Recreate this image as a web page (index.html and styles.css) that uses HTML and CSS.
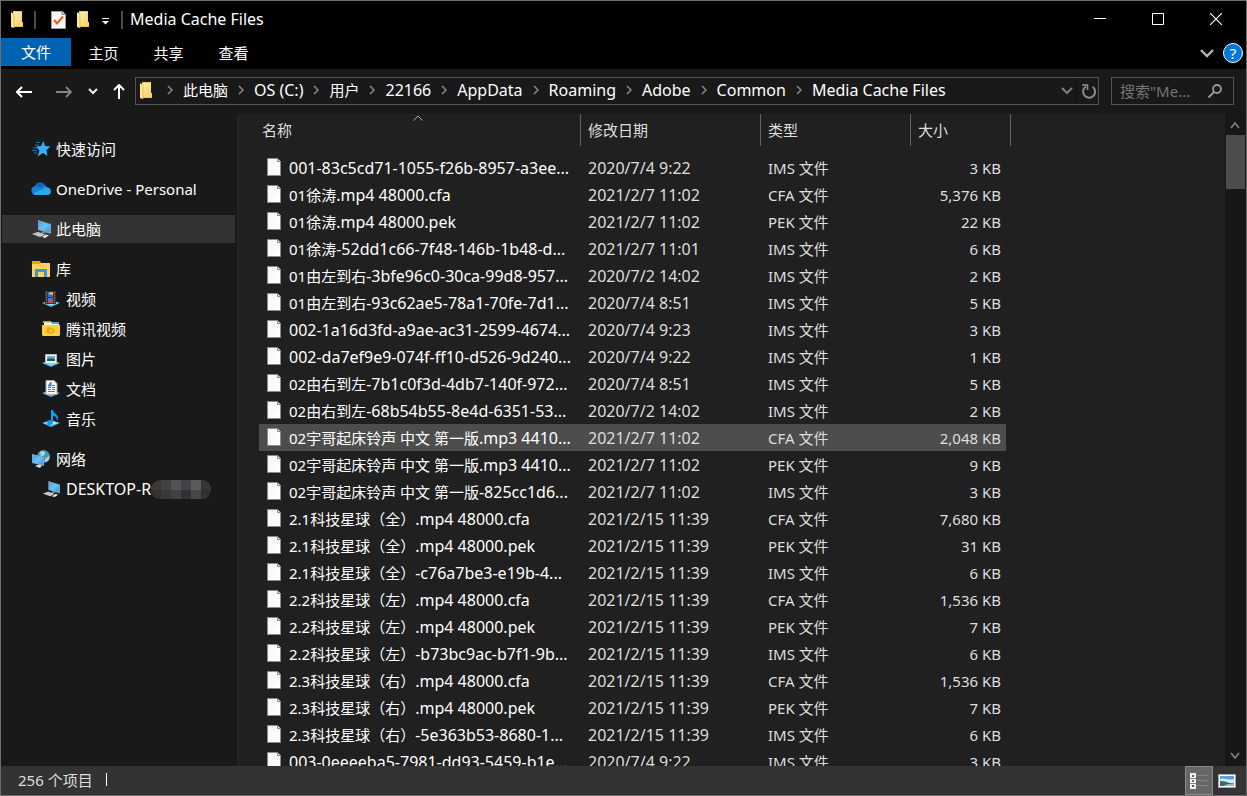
FILE: index.html
```html
<!DOCTYPE html>
<html lang="zh-CN">
<head>
<meta charset="utf-8">
<title>Media Cache Files</title>
<link rel="stylesheet" href="styles.css">
</head>
<body>
<svg class="defs" aria-hidden="true">
  <defs>
    <linearGradient id="paper" x1="0" y1="0" x2="1" y2="1"><stop offset="0" stop-color="#f4f6f8"/><stop offset="1" stop-color="#fff"/></linearGradient>
    <linearGradient id="gold" x1="0" y1="0" x2="1" y2="1"><stop offset="0" stop-color="#fff0a8"/><stop offset="1" stop-color="#f5cd62"/></linearGradient>
    <linearGradient id="screen" x1="0" y1="0" x2="1" y2="1"><stop offset="0" stop-color="#3da3f2"/><stop offset=".5" stop-color="#68c4ff"/><stop offset="1" stop-color="#2c9cf2"/></linearGradient>
    <symbol id="file" viewBox="0 0 14 18"><path d="M.5.5h10l3 3v14H.5z" fill="url(#paper)" stroke="#8b8b8b"/><path d="M10.500.5v3h3" fill="#ddd" stroke="#8b8b8b"/></symbol>
    <symbol id="folder" viewBox="0 0 13 18"><path d="M2 0h9v11h1v5H2z" fill="#eec35d"/><path d="M3 1h8v10h1v4H3z" fill="url(#gold)"/><path d="M0 1l3 2v14l-3-1z" fill="#ffe69a"/><path d="M3 3v14" stroke="#d9a640" stroke-width=".6"/></symbol>
    <symbol id="next" viewBox="0 0 6 10"><path d="M1 1l4 4-4 4" fill="none" stroke="#8a8a8a" stroke-width="1.500"/></symbol>
    <symbol id="pc" viewBox="0 0 20 18"><path d="M7 0l13 4v10L7 10z" fill="#8d9ba5"/><path d="M8 1l11 4v7.500L8 9z" fill="url(#screen)"/><path d="M12 11l4 1.500-4 1-2-1z" fill="#7c868e"/><path d="M1 14l6-2 7 2.500-5 2.500z" fill="#d9dde2"/><path d="M11 17l4-2.500 3 .8-4 2.700z" fill="#e6e9ed"/><path d="M3 14l7 2M5 13.200l7 2" stroke="#9aa1a8" stroke-width=".6"/></symbol>
    <symbol id="stand" viewBox="0 0 18 7"><path d="M0 3l9-3 9 3-9 4z" fill="#4eb8f0"/><path d="M2 3l7-2 7 2-7 2z" fill="#bfeaff"/></symbol>
  </defs>
</svg>

<div class="window">
  <header class="titlebar">
    <div class="quick">
      <svg class="ic-folder" aria-hidden="true"><use href="#folder"/></svg>
      <span class="sep sep-first"></span>
      <button class="plain q-check" aria-label="属性"><svg width="15" height="18" viewBox="0 0 15 18"><path d="M.5.5h11l3 3v14H.5z" fill="#f7f7f7" stroke="#9b9b9b"/><path d="M11 .5v3h3.500" fill="#ccc" stroke="#8a8a8a"/><path d="M3 9l3 3.500 6-7" fill="none" stroke="#ee5a1c" stroke-width="2"/></svg></button>
      <button class="plain q-folder" aria-label="新建文件夹"><svg class="ic-folder"><use href="#folder"/></svg></button>
      <button class="plain q-more" aria-label="自定义快速访问工具栏"><svg width="7" height="7" viewBox="0 0 7 7"><path d="M0 .5h7" stroke="#fff"/><path d="M0 3h7L3.500 6.500z" fill="#fff"/></svg></button>
      <span class="sep"></span>
    </div>
    <h1>Media Cache Files</h1>
    <div class="caption">
      <button aria-label="最小化"><svg width="12" height="12"><path d="M0 5.500h12" stroke="#fff"/></svg></button>
      <button aria-label="最大化"><svg width="12" height="12"><path d="M.5.5h11v11H.5z" fill="none" stroke="#fff"/></svg></button>
      <button aria-label="关闭"><svg width="12" height="12"><path d="M0 0l12 12M12 0L0 12" stroke="#fff" stroke-width="1.200"/></svg></button>
    </div>
  </header>

  <div class="ribbon">
    <button class="tab active">文件</button>
    <button class="tab">主页</button>
    <button class="tab">共享</button>
    <button class="tab">查看</button>
    <div class="ribbon-tools">
      <button class="plain" aria-label="展开功能区"><svg width="14" height="9" viewBox="0 0 14 9"><path d="M1 1l6 6 6-6" fill="none" stroke="#b5b5b5" stroke-width="2.400"/></svg></button>
      <button class="help" aria-label="帮助">?</button>
    </div>
  </div>

  <div class="navbar">
    <div class="history">
      <button class="plain" aria-label="后退"><svg width="16" height="12" viewBox="0 0 16 12"><path d="M6 1L1 6l5 5M1 6h15" fill="none" stroke="#fff" stroke-width="2"/></svg></button>
      <button class="plain h-fwd" aria-label="前进"><svg width="16" height="12" viewBox="0 0 16 12"><path d="M10 1l5 5-5 5M15 6H0" fill="none" stroke="#858585" stroke-width="1.800"/></svg></button>
      <button class="plain h-recent" aria-label="最近浏览的位置"><svg width="10" height="7" viewBox="0 0 10 7"><path d="M1 1l4 4 4-4" fill="none" stroke="#eee" stroke-width="2"/></svg></button>
      <button class="plain h-up" aria-label="上移"><svg width="12" height="15" viewBox="0 0 12 15"><path d="M1 6l5-5 5 5M6 1v14" fill="none" stroke="#fff" stroke-width="2"/></svg></button>
    </div>
    <nav class="address" aria-label="路径">
      <svg class="ic-folder" aria-hidden="true"><use href="#folder"/></svg>
      <ol class="crumbs">
        <li><svg class="next"><use href="#next"/></svg><a href="#pc">此电脑</a></li>
        <li><svg class="next"><use href="#next"/></svg><a href="#c" class="lat">OS (C:)</a></li>
        <li><svg class="next"><use href="#next"/></svg><a href="#users">用户</a></li>
        <li><svg class="next"><use href="#next"/></svg><a href="#22166" class="lat">22166</a></li>
        <li><svg class="next"><use href="#next"/></svg><a href="#appdata" class="lat">AppData</a></li>
        <li><svg class="next"><use href="#next"/></svg><a href="#roaming" class="lat">Roaming</a></li>
        <li><svg class="next"><use href="#next"/></svg><a href="#adobe" class="lat">Adobe</a></li>
        <li><svg class="next"><use href="#next"/></svg><a href="#common" class="lat">Common</a></li>
        <li><svg class="next"><use href="#next"/></svg><a href="#cache" class="lat">Media Cache Files</a></li>
      </ol>
      <button class="plain" aria-label="上一个位置"><svg width="12" height="8" viewBox="0 0 12 8"><path d="M1 1l5 5 5-5" fill="none" stroke="#808080" stroke-width="2"/></svg></button>
      <button class="plain refresh" aria-label="刷新"><svg width="14" height="15" viewBox="0 0 14 15"><path d="M10.500 2.700A6 6 0 1 1 4 2.500" fill="none" stroke="#8a8a8a" stroke-width="2"/><path d="M0 1h5.500v5" fill="none" stroke="#8a8a8a" stroke-width="1.600"/></svg></button>
    </nav>
    <form class="search">
      <input type="text" placeholder='搜索"Me...' aria-label="搜索">
      <button type="button" class="plain" aria-label="开始搜索"><svg width="14" height="14" viewBox="0 0 14 14"><circle cx="9" cy="5" r="4" fill="none" stroke="#999" stroke-width="1.800"/><path d="M6 8l-5.500 5.500" stroke="#999" stroke-width="2"/></svg></button>
    </form>
  </div>

  <div class="body">
    <nav class="sidebar" aria-label="导航窗格">
      <ul>
        <li class="top"><a href="#quick"><svg width="20" height="18" viewBox="0 0 20 18"><path d="M12.500 1l1.500 5 5.500.5-4 3.500 1 6-4.500-3-5.500 3.500 2-6L5 6.500l5-.5z" fill="#34b0f7"/><path d="M5 2.500h4M4 5h4M2 8h4M1 10.500h5M3 13h3" stroke="#1d6fa6" stroke-width="1"/></svg>快速访问</a></li>
        <li class="top"><a href="#onedrive"><svg width="20" height="18" viewBox="0 0 20 18"><path d="M4 6.500C5 1 13 1 14.500 6l-8 4z" fill="#0f63b5"/><path d="M5 15a4.500 4.500 0 0 1-1-8.900c3-.6 5 .9 8 2.900l-5 6z" fill="#1582d8"/><path d="M10 8c1-2 4-3 6-1.500l-3 3z" fill="#1582d8"/><path d="M2 13.500L12 9c2-3 8-2 8 2.500 0 2-1.500 3.500-3.500 3.500H5c-1.500 0-2.500-.6-3-1.500z" fill="#2ba7ee"/></svg>OneDrive - Personal</a></li>
        <li class="top"><a href="#pc" class="current"><svg width="20" height="18"><use href="#pc"/></svg>此电脑</a></li>
        <li class="top"><a href="#lib"><svg width="20" height="18" viewBox="0 0 20 18"><path d="M1 1h8l1 2h9v13H1z" fill="#e6a50b"/><path d="M1 4h8l1-1h9v14H1z" fill="#ffd45e"/><path d="M4 17V9h12v8h-3v-5H7v5z" fill="#3d96dc"/></svg>库</a></li>
        <li class="sub"><a href="#video"><svg width="18" height="18" viewBox="0 0 18 18"><svg y="10" width="18" height="7"><use href="#stand"/></svg><path d="M3 1h11v13H3z" fill="#37322f"/><path d="M6 2h5v5H6z" fill="#3268d8"/><path d="M6 4l3-2h2v3z" fill="#e9bd36"/><path d="M6 8h5v5H6z" fill="#4d70e8"/><path d="M6 12l5-2v3H6z" fill="#d94930"/><path d="M4.500 2v11M12.500 2v11" stroke="#999" stroke-dasharray="1 1.500"/></svg>视频</a></li>
        <li class="sub"><a href="#tencent"><svg width="18" height="18" viewBox="0 0 18 18"><path d="M1 1h8l1 2H1z" fill="#d89d18"/><path d="M2 2.500h15v4H2z" fill="#f3f3ea"/><path d="M10 2h7v2h-7z" fill="#4baab1"/><path d="M0 5h18v10l-1 1H1l-1-1z" fill="#ffcf42"/><path d="M5 7.500c3-1 8 .5 8 3.200s-5 4-8 2.300c-1-1-1-4.500 0-5.500z" fill="#e9aa18"/><path d="M8 9v3.500l3-1.700z" fill="#ffcf42"/></svg>腾讯视频</a></li>
        <li class="sub"><a href="#pics"><svg width="18" height="18" viewBox="0 0 18 18"><svg y="10" width="18" height="7"><use href="#stand"/></svg><path d="M3.500 4.500h11v9h-11z" fill="#f5f5f5" stroke="#b9b9b9"/><path d="M5 6h8v5H5z" fill="#76a9dc"/><path d="M5 9l3-1 5 1v2H5z" fill="#21634b"/></svg>图片</a></li>
        <li class="sub"><a href="#docs"><svg width="18" height="18" viewBox="0 0 18 18"><svg y="10" width="18" height="7"><use href="#stand"/></svg><path d="M4 .5h8l3 3v11H4z" fill="#f6f6f6" stroke="#aaa"/><path d="M9 2L6 6h3zM6 7.500h3M6 9.500h3M6 11.500h7" fill="#248bd2" stroke="#248bd2"/><path d="M10 5.500h3M10 7.500h3M10 9.500h3" stroke="#667784"/></svg>文档</a></li>
        <li class="sub"><a href="#music"><svg width="18" height="18" viewBox="0 0 18 18"><svg y="10" width="18" height="7"><use href="#stand"/></svg><path d="M9 0h2c1 4 5 4 5 8 0 2-1 3-1 3 0-4-2-5-4-5v6c0 4-6 4-6 1 0-2 2-3 4-3z" fill="#0b9cf5"/></svg>音乐</a></li>
        <li class="top"><a href="#net"><svg width="20" height="18" viewBox="0 0 20 18"><circle cx="12.500" cy="6.500" r="6.500" fill="#4b94b6"/><path d="M9 2c3-2 6 0 5 2s-4 2-4 4M14 9l4-3c1 3-1 6-4 6z" fill="#a9d8e4"/><path d="M1 4l12 3v9L1 13z" fill="#7fa9c4"/><path d="M2 5.500l10 2.500v6.500L2 12z" fill="url(#screen)"/><path d="M4 16l4-1.500 3 1-2 2.500z" fill="#d8dde1"/></svg>网络</a></li>
        <li class="sub"><a href="#desktop"><svg width="18" height="18"><use href="#pc"/></svg><span class="lat">DESKTOP-R</span><svg class="mosaic" width="60" height="19" viewBox="0 0 60 19" aria-hidden="true"><path d="M0 0h60v19H0z" fill="#393939"/><path d="M10 0h10v10H10z" fill="#424143"/><path d="M20 0h10v10H20z" fill="#535353"/><path d="M30 0h10v10H30z" fill="#434249"/><path d="M40 0h10v10H40z" fill="#595c5b"/><path d="M50 0h10v10H50z" fill="#353535"/><path d="M0 10h10v9H0z" fill="#333233"/><path d="M20 10h10v9H20z" fill="#414141"/><path d="M30 10h10v9H30z" fill="#303237"/><path d="M40 10h10v9H40z" fill="#454745"/><path d="M50 10h10v9H50z" fill="#33302d"/></svg></a></li>
      </ul>
    </nav>

    <main class="files">
      <table>
        <colgroup><col class="c-name"><col class="c-date"><col class="c-type"><col class="c-size"></colgroup>
        <thead>
          <tr>
            <th><button class="first">名称<svg class="sort" width="10" height="6" viewBox="0 0 10 6"><path d="M.5 5.500L5 1l4.500 4.500" fill="none" stroke="#aaa"/></svg></button></th>
            <th><button>修改日期</button></th><th><button>类型</button></th><th><button>大小</button></th>
          </tr>
        </thead>
        <tbody>
          <tr><td><svg class="doc"><use href="#file"/></svg><span class="lat">001-83c5cd71-1055-f26b-8957-a3ee...</span></td><td>2020/7/4 9:22</td><td>IMS 文件</td><td>3 KB</td></tr>
          <tr><td><svg class="doc"><use href="#file"/></svg>01徐涛<span class="lat">.mp4 48000.cfa</span></td><td>2021/2/7 11:02</td><td>CFA 文件</td><td>5,376 KB</td></tr>
          <tr><td><svg class="doc"><use href="#file"/></svg>01徐涛<span class="lat">.mp4 48000.pek</span></td><td>2021/2/7 11:02</td><td>PEK 文件</td><td>22 KB</td></tr>
          <tr><td><svg class="doc"><use href="#file"/></svg>01徐涛<span class="lat">-52dd1c66-7f48-146b-1b48-d...</span></td><td>2021/2/7 11:01</td><td>IMS 文件</td><td>6 KB</td></tr>
          <tr><td><svg class="doc"><use href="#file"/></svg>01由左到右<span class="lat">-3bfe96c0-30ca-99d8-957...</span></td><td>2020/7/2 14:02</td><td>IMS 文件</td><td>2 KB</td></tr>
          <tr><td><svg class="doc"><use href="#file"/></svg>01由左到右<span class="lat">-93c62ae5-78a1-70fe-7d1...</span></td><td>2020/7/4 8:51</td><td>IMS 文件</td><td>5 KB</td></tr>
          <tr><td><svg class="doc"><use href="#file"/></svg><span class="lat">002-1a16d3fd-a9ae-ac31-2599-4674...</span></td><td>2020/7/4 9:23</td><td>IMS 文件</td><td>3 KB</td></tr>
          <tr><td><svg class="doc"><use href="#file"/></svg><span class="lat">002-da7ef9e9-074f-ff10-d526-9d240...</span></td><td>2020/7/4 9:22</td><td>IMS 文件</td><td>1 KB</td></tr>
          <tr><td><svg class="doc"><use href="#file"/></svg>02由右到左<span class="lat">-7b1c0f3d-4db7-140f-972...</span></td><td>2020/7/4 8:51</td><td>IMS 文件</td><td>5 KB</td></tr>
          <tr><td><svg class="doc"><use href="#file"/></svg>02由右到左<span class="lat">-68b54b55-8e4d-6351-53...</span></td><td>2020/7/2 14:02</td><td>IMS 文件</td><td>2 KB</td></tr>
          <tr class="hover"><td><svg class="doc"><use href="#file"/></svg>02宇哥起床铃声 中文 第一版<span class="lat">.mp3 4410...</span></td><td>2021/2/7 11:02</td><td>CFA 文件</td><td>2,048 KB</td></tr>
          <tr><td><svg class="doc"><use href="#file"/></svg>02宇哥起床铃声 中文 第一版<span class="lat">.mp3 4410...</span></td><td>2021/2/7 11:02</td><td>PEK 文件</td><td>9 KB</td></tr>
          <tr><td><svg class="doc"><use href="#file"/></svg>02宇哥起床铃声 中文 第一版<span class="lat">-825cc1d6...</span></td><td>2021/2/7 11:02</td><td>IMS 文件</td><td>3 KB</td></tr>
          <tr><td><svg class="doc"><use href="#file"/></svg>2.1科技星球（全）<span class="lat">.mp4 48000.cfa</span></td><td>2021/2/15 11:39</td><td>CFA 文件</td><td>7,680 KB</td></tr>
          <tr><td><svg class="doc"><use href="#file"/></svg>2.1科技星球（全）<span class="lat">.mp4 48000.pek</span></td><td>2021/2/15 11:39</td><td>PEK 文件</td><td>31 KB</td></tr>
          <tr><td><svg class="doc"><use href="#file"/></svg>2.1科技星球（全）<span class="lat">-c76a7be3-e19b-4...</span></td><td>2021/2/15 11:39</td><td>IMS 文件</td><td>6 KB</td></tr>
          <tr><td><svg class="doc"><use href="#file"/></svg>2.2科技星球（左）<span class="lat">.mp4 48000.cfa</span></td><td>2021/2/15 11:39</td><td>CFA 文件</td><td>1,536 KB</td></tr>
          <tr><td><svg class="doc"><use href="#file"/></svg>2.2科技星球（左）<span class="lat">.mp4 48000.pek</span></td><td>2021/2/15 11:39</td><td>PEK 文件</td><td>7 KB</td></tr>
          <tr><td><svg class="doc"><use href="#file"/></svg>2.2科技星球（左）<span class="lat">-b73bc9ac-b7f1-9b...</span></td><td>2021/2/15 11:39</td><td>IMS 文件</td><td>6 KB</td></tr>
          <tr><td><svg class="doc"><use href="#file"/></svg>2.3科技星球（右）<span class="lat">.mp4 48000.cfa</span></td><td>2021/2/15 11:39</td><td>CFA 文件</td><td>1,536 KB</td></tr>
          <tr><td><svg class="doc"><use href="#file"/></svg>2.3科技星球（右）<span class="lat">.mp4 48000.pek</span></td><td>2021/2/15 11:39</td><td>PEK 文件</td><td>7 KB</td></tr>
          <tr><td><svg class="doc"><use href="#file"/></svg>2.3科技星球（右）<span class="lat">-5e363b53-8680-1...</span></td><td>2021/2/15 11:39</td><td>IMS 文件</td><td>6 KB</td></tr>
          <tr><td><svg class="doc"><use href="#file"/></svg><span class="lat">003-0eeeeba5-7981-dd93-5459-b1e...</span></td><td>2020/7/4 9:22</td><td>IMS 文件</td><td>3 KB</td></tr>
        </tbody>
      </table>
    </main>

    <div class="scrollbar">
      <button class="plain" aria-label="向上滚动"><svg width="10" height="8" viewBox="0 0 10 8"><path d="M1 7l4-5 4 5" fill="none" stroke="#777" stroke-width="2"/></svg></button>
      <div class="thumb"></div>
      <button class="plain" aria-label="向下滚动"><svg width="10" height="8" viewBox="0 0 10 8"><path d="M1 1l4 5 4-5" fill="none" stroke="#777" stroke-width="2"/></svg></button>
    </div>
  </div>

  <footer class="status">
    <span class="count">256 个项目</span>
    <div class="views">
      <button class="view on" aria-label="详细信息"><svg width="18" height="16" viewBox="0 0 18 16"><path d="M0 0h6v16H0z" fill="#f2f2f2"/><path d="M0 5.500h6M0 10.500h6" stroke="#666" stroke-width=".8"/><path d="M2 2h2v2H2z" fill="#2c7d8c"/><path d="M2 7h2v2H2z" fill="#7d7a1c"/><path d="M2 12h2v2H2z" fill="#c2330f"/><path d="M7 2.500h5M13 2.500h5M7 7.500h5M13 7.500h5M7 12.500h5M13 12.500h5" stroke="#858585"/></svg></button>
      <button class="view" aria-label="大缩略图"><svg width="18" height="14" viewBox="0 0 18 14"><path d="M.5.5h17v13H.5z" fill="#fff" stroke="#aaa"/><path d="M2 2h14v10H2z" fill="#5d9fe0"/><path d="M2 5c4-2 8 2 14 0v4H2z" fill="#d5e9f5"/><path d="M2 7l5 .5 9 3V12H2z" fill="#2e6d74"/><path d="M5 12l5-2h6v2z" fill="#8fb8c8"/></svg></button>
    </div>
  </footer>
</div>
</body>
</html>
```
FILE: styles.css
```css
* { box-sizing: border-box; }

body {
  margin: 0;
  background: #000;
  color: #fff;
  font: 15px/20px "Noto Sans", "Noto Sans CJK SC", sans-serif;
}

button, input { font: inherit; color: inherit; }

button {
  border: 0;
  padding: 0;
  background: none;
}

a { color: inherit; text-decoration: none; }
ul, ol { list-style: none; margin: 0; padding: 0; }
svg { display: block; flex: none; }
.defs { position: absolute; width: 0; height: 0; }
.plain { display: flex; align-items: center; justify-content: center; }

/* Latin runs are set one size up so that they balance the CJK glyphs */
.lat { font-size: 16px; white-space: pre; }

.window {
  display: flex;
  flex-direction: column;
  height: 100vh;
  border: 1px solid #6c6c6c;
  overflow: hidden;
}

/* Title bar */
.titlebar { display: flex; align-items: center; height: 37px; }
.titlebar h1 { margin: 0 0 0 7px; padding-bottom: 2px; font-size: 16px; font-weight: 400; flex: 1; }
.quick { display: flex; align-items: center; padding-left: 10px; }
.ic-folder { width: 13px; height: 18px; }
.sep { width: 2px; height: 18px; background: #4c4c4c; }
.sep-first { margin-left: 10px; }
.q-check { margin-left: 15px; }
.q-folder { margin-left: 11px; }
.q-more { margin: 0 12px; padding-top: 4px; }
.caption { display: flex; align-self: stretch; padding: 0 1px 2px 0; }
.caption button { width: 58px; display: flex; align-items: center; justify-content: center; }

/* Ribbon */
.ribbon { display: flex; height: 31px; align-items: flex-start; }
.tab { width: 65px; height: 30px; }
.tab.active { width: 70px; height: 28px; background: #0063b1; }
.ribbon-tools { display: flex; align-items: center; gap: 9px; margin-left: auto; height: 30px; padding-right: 3px; }
.help {
  width: 20px;
  height: 20px;
  border: 1px solid #fff;
  border-radius: 50%;
  background: #0078d7;
  line-height: 18px;
}

/* Navigation bar */
.navbar { display: flex; align-items: flex-start; height: 45px; padding: 8px 12px 0 15px; background: #191919; }
.history { display: flex; align-items: center; height: 29px; width: 119px; }
.h-fwd { margin-left: 24px; }
.h-recent { margin-left: 16px; }
.h-up { margin-left: 15px; }
.address { display: flex; align-items: center; flex: 1; min-width: 0; height: 28px; border: 1px solid #535353; padding: 0 2px 0 4px; }
.crumbs { display: flex; flex: 1; margin-left: 4px; padding-bottom: 2px; }
.crumbs li { display: flex; align-items: center; }
.next { width: 6px; height: 10px; margin: 0 10px; }
.refresh { height: 26px; margin-left: 3px; padding-left: 5px; border-left: 1px solid #111; }
.search { display: flex; align-items: center; width: 123px; height: 28px; margin-left: 12px; padding: 0 11px 0 8px; border: 1px solid #535353; }
.search input { flex: 1; min-width: 0; padding: 0; border: 0; outline: 0; background: none; }
.search input::placeholder { color: #747474; opacity: 1; }

/* Body */
.body { display: flex; flex: 1; min-height: 0; background: #202020; }

.sidebar { width: 238px; flex: none; padding: 11px 2px 0 1px; background: #191919; border-right: 2px solid #232323; }
.sidebar ul { display: flex; flex-direction: column; gap: 2px; }
.sidebar .top { margin-top: 10px; }
.sidebar a { display: flex; align-items: center; height: 28px; padding-left: 29px; }
.sidebar a svg:first-child { margin-right: 5px; }
.sidebar .sub a { padding-left: 40px; }
.sidebar .sub a svg:first-child { margin-right: 6px; }
.sidebar .current { background: #333; }
.mosaic { border-radius: 9px; }

/* File list */
.files { flex: 1; min-width: 0; padding-left: 20px; overflow: hidden; }
.files table { table-layout: fixed; width: 752px; border-collapse: collapse; }
.c-name { width: 322px; }
.c-date { width: 180px; }
.c-type { width: 150px; }
.c-size { width: 100px; }
th { padding: 0 0 8px; font-weight: 400; }
th button { display: flex; align-items: center; width: 100%; height: 32px; padding-left: 7px; border-right: 1px solid #636363; color: #dedede; }
th .first { position: relative; padding-left: 3px; }
.sort { position: absolute; top: 1px; left: 48%; }
td { height: 27px; padding: 0 0 0 7px; color: #dedede; white-space: nowrap; }
td:first-child { display: flex; align-items: center; padding-left: 8px; color: #fff; }
td:nth-child(2) { font-size: 16px; }
td:last-child { padding: 0 10px 0 0; text-align: right; }
.doc { width: 14px; height: 18px; margin: 0 8px 2px 0; }
.hover td { background: #4d4d4d; }
.hover td:last-child { background: linear-gradient(#4d4d4d, #4d4d4d) 0 0 / calc(100% - 5px) 100% no-repeat; }

.scrollbar { display: flex; flex-direction: column; width: 21px; padding-right: 1px; background: #171717; }
.scrollbar .plain { height: 21px; }
.thumb { height: 54px; margin: 0 0 auto 1px; background: #4d4d4d; }

/* Status bar */
.status { display: flex; align-items: center; height: 29px; background: #333; color: #dedede; }
.count { display: flex; align-items: center; gap: 13px; padding: 0 0 2px 17px; }
.count::after { content: ""; width: 1px; height: 13px; background: #fff; }
.views { display: flex; align-self: stretch; margin-left: auto; padding-right: 5px; }
.view { display: flex; align-items: center; justify-content: center; width: 28px; }
.view.on { background: #666; border: 1px solid #888; }
```
